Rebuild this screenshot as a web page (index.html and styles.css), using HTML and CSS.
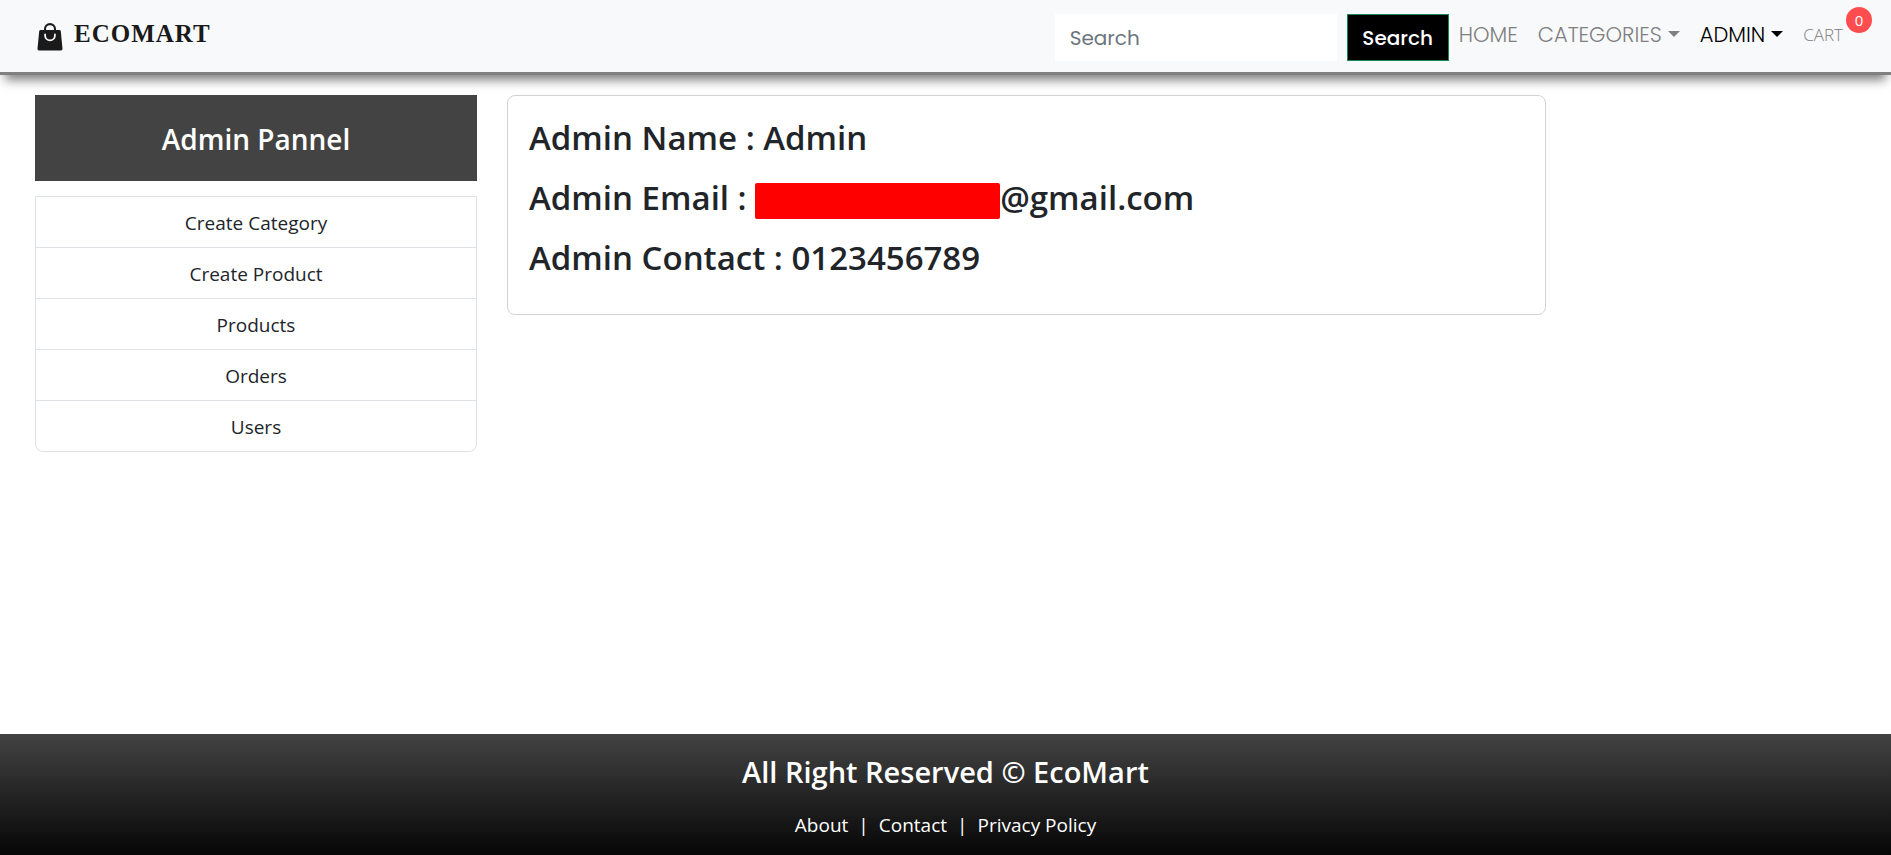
FILE: index.html
```html
<!DOCTYPE html>
<html lang="en">
<head>
<meta charset="utf-8">
<meta name="viewport" content="width=device-width, initial-scale=1">
<title>EcoMart - Admin Dashboard</title>
<link rel="stylesheet" href="styles.css">
</head>
<body>
<header class="navbar">
  <a class="brand" href="#">
    <svg class="brand-icon" viewBox="0 0 25 28" aria-hidden="true">
      <path fill="currentColor" fill-rule="evenodd" d="M12.500 0A6 6 0 0 0 6.500 6V7H3.200Q1.900 7 1.700 8.300L0 25.800Q0 27.500 1.500 27.500H23.500Q25 27.500 25 25.800L23.300 8.300Q23.100 7 21.800 7H18.500V6A6 6 0 0 0 12.500 0ZM8.500 7V6.200A4 4 0 0 1 16.500 6.200V7Z"/>
      <path fill="none" stroke="#f8f9fa" stroke-width="1.800" stroke-linecap="round" d="M7.600 11.500V12.500A4.900 4.900 0 0 0 17.400 12.500V11.500"/>
    </svg>
    <span class="brand-name">ECOMART</span>
  </a>
  <div class="nav-end">
    <form class="search" role="search">
      <input class="search-input" type="search" placeholder="Search" aria-label="Search">
      <button class="search-button" type="submit">Search</button>
    </form>
    <nav class="nav-links" aria-label="Main">
      <a class="nav-link" href="#">HOME</a>
      <a class="nav-link caret" href="#">CATEGORIES</a>
      <a class="nav-link caret active" href="#">ADMIN</a>
      <a class="nav-link cart" href="#">CART<span class="badge">0</span></a>
    </nav>
  </div>
</header>
<main class="dashboard">
  <aside class="sidebar">
    <h4 class="panel-title">Admin Pannel</h4>
    <nav class="menu" aria-label="Admin">
      <a class="menu-item" href="#">Create Category</a>
      <a class="menu-item" href="#">Create Product</a>
      <a class="menu-item" href="#">Products</a>
      <a class="menu-item" href="#">Orders</a>
      <a class="menu-item" href="#">Users</a>
    </nav>
  </aside>
  <section class="card">
    <h3 class="detail">Admin Name : Admin</h3>
    <h3 class="detail">Admin Email : <span class="redacted"></span>@gmail.com</h3>
    <h3 class="detail">Admin Contact : 0123456789</h3>
  </section>
</main>
<footer class="footer">
  <h4 class="footer-title">All Right Reserved © EcoMart</h4>
  <p class="footer-links"><a href="#">About</a><span>|</span><a href="#">Contact</a><span>|</span><a href="#">Privacy Policy</a></p>
</footer>
</body>
</html>
```
FILE: styles.css
```css
* { box-sizing: border-box; }

body {
  margin: 0;
  min-height: 100vh;
  display: flex;
  flex-direction: column;
  background: #fff;
  color: #212529;
  font-family: "Segoe UI", "Open Sans", "Noto Sans", sans-serif;
  font-size: 19px;
  line-height: 30px;
}

h3, h4, p { margin: 0; }
a { color: inherit; text-decoration: none; }

.navbar {
  display: flex;
  justify-content: space-between;
  height: 75px;
  padding: 14px 19px 0 37px;
  background: #f8f9fa;
  border-bottom: 3px solid #808080;
  box-shadow: 0 10px 10px -5px rgba(0, 0, 0, 0.5);
}

.brand { display: flex; gap: 11px; color: #1a1a1a; }
.brand-icon { width: 26px; height: 28px; margin-top: 9px; }
.brand-name {
  padding-top: 5px;
  font-family: "Liberation Serif", serif;
  font-size: 25px;
  font-weight: 700;
  letter-spacing: 1px;
}

.nav-end {
  display: flex;
  font-family: Poppins, Inter, sans-serif;
}

.search { display: flex; gap: 10px; height: 47px; }
.search-input {
  width: 282px;
  padding: 0 15px;
  border: 0;
  background: #fff;
  font: inherit;
  font-size: 20px;
}
.search-input::placeholder { color: #6c757d; opacity: 1; }
.search-button {
  width: 102px;
  padding: 0;
  border: 1px solid #198754;
  background: #000;
  color: #fff;
  font: inherit;
  font-size: 20px;
  font-weight: 500;
}

.nav-links {
  display: flex;
  gap: 20px;
  padding: 6px 0 0 10px;
  color: #808080;
  font-size: 21px;
  font-weight: 300;
}
.nav-link { position: relative; }
.caret::after {
  content: "";
  display: inline-block;
  margin-left: 6px;
  vertical-align: 5px;
  border: 6px solid transparent;
  border-top-color: currentColor;
  border-bottom: 0;
}
.active { color: #000; }
.cart {
  padding-right: 29px;
  font-family: "Open Sans", sans-serif;
  font-size: 17px;
}
.badge {
  position: absolute;
  top: -13px;
  right: 0;
  width: 26px;
  height: 26px;
  border-radius: 50%;
  background: #ff4d4f;
  color: #fff;
  font-size: 15px;
  font-weight: 400;
  line-height: 26px;
  text-align: center;
}

.dashboard {
  flex: 1;
  display: grid;
  grid-template-columns: calc(25% - 22px) 56%;
  gap: 30px;
  align-items: start;
  padding: 20px 0 20px 35px;
}

.panel-title {
  margin-bottom: 15px;
  padding: 26px 25px 24px;
  background: #434343;
  color: #fff;
  font-size: 28px;
  font-weight: 600;
  line-height: 36px;
  text-align: center;
}
.menu {
  border: 1px solid #dee2e6;
  border-radius: 0 0 8px 8px;
}
.menu-item {
  display: block;
  padding: 11px 20px 9px;
  text-align: center;
}
.menu-item + .menu-item { border-top: 1px solid #dee2e6; }

.card {
  padding: 21px 21px 17px;
  border: 1px solid #d3d3d4;
  border-radius: 8px;
}
.detail {
  margin-bottom: 18px;
  font-size: 33px;
  font-weight: 600;
  line-height: 42px;
}
.redacted {
  display: inline-block;
  width: 245px;
  height: 36px;
  border-radius: 2px;
  background: #f00;
  vertical-align: -9px;
}

.footer {
  padding: 20px 20px 15px;
  background: linear-gradient(#434343, #060606);
  color: #fff;
  text-align: center;
}
.footer-title {
  margin-bottom: 20px;
  font-size: 29px;
  font-weight: 600;
  line-height: 36px;
}
.footer-links { display: flex; justify-content: center; gap: 10px; }
```
